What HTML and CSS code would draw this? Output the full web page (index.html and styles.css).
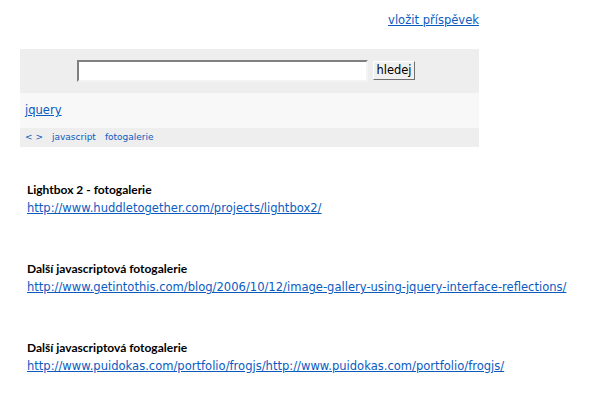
FILE: index.html
```html
<!DOCTYPE html>
<html>
<head>
<meta charset="utf-8">
<link rel="stylesheet" href="styles.css">
</head>
<body>
<div class="page">
  <div class="top"><a href="#">vložit příspěvek</a></div>
  <form class="search">
    <input type="text" class="q">
    <button type="button" class="btn">hledej</button>
  </form>
  <div class="tagbar"><a href="#">jquery</a></div>
  <div class="subbar"><a href="#">&lt; &gt;</a><a href="#">javascript</a><a href="#">fotogalerie</a></div>
</div>
<div class="list">
  <div class="item">
    <h3>Lightbox 2 - fotogalerie</h3>
    <a href="#">http://www.huddletogether.com/projects/lightbox2/</a>
  </div>
  <div class="item">
    <h3>Další javascriptová fotogalerie</h3>
    <a href="#">http://www.getintothis.com/blog/2006/10/12/image-gallery-using-jquery-interface-reflections/</a>
  </div>
  <div class="item">
    <h3>Další javascriptová fotogalerie</h3>
    <a href="#">http://www.puidokas.com/portfolio/frogjs/http://www.puidokas.com/portfolio/frogjs/</a>
  </div>
</div>
</body>
</html>
```
FILE: styles.css
```css
body {
  margin: 0;
  font-family: "DejaVu Sans", Verdana, sans-serif;
  font-size: 11.55px;
  background: #fff;
  color: #000;
}
a { color: #0b5bbf; }
.page {
  width: 459px;
  margin-left: 20px;
}
.top {
  text-align: right;
  padding-top: 13px;
  height: 49px;
  box-sizing: border-box;
}
.search {
  background: #eee;
  height: 44px;
  margin: 0;
  display: flex;
  align-items: center;
  padding-left: 57px;
  gap: 5px;
}
.q {
  width: 291px;
  height: 22px;
  box-sizing: border-box;
  border: 2px solid;
  border-color: #808080 #f4f4f4 #f4f4f4 #808080;
  background: #fff;
  margin: 0;
  padding: 0;
}
.btn {
  height: 19px;
  width: 42px;
  box-sizing: border-box;
  padding: 0;
  margin: 0 0 2px;
  font-family: "DejaVu Sans", sans-serif;
  font-size: 11.5px;
  color: #000;
  background: #f0f0f0;
  border: 1px solid;
  border-color: #fff #707070 #707070 #fff;
}
.tagbar {
  background: #f8f8f8;
  height: 35px;
  box-sizing: border-box;
  padding: 10px 0 0 5px;
}
.subbar {
  background: #eee;
  height: 19px;
  box-sizing: border-box;
  padding: 4px 0 0 5px;
  font-size: 9px;
  display: flex;
  gap: 9px;
}
.subbar a { text-decoration: none; }
.list {
  margin-left: 27px;
  padding-top: 35px;
}
.item {
  height: 79px;
}
.item h3 {
  margin: 0;
  font-family: Lato, "DejaVu Sans Condensed", sans-serif;
  font-size: 12px;
  font-weight: bold;
  line-height: 16px;
}
.item a {
  display: inline-block;
  line-height: 16px;
  margin-top: 2px;
}
```
